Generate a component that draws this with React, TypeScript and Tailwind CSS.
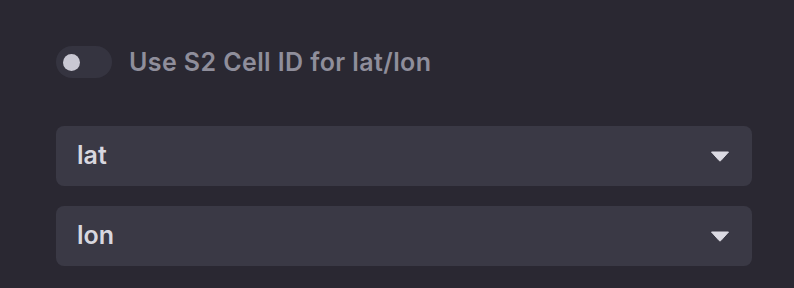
import React from "react";

function Caret() {
  return (
    <svg width="20" height="11" viewBox="0 0 20 11" className="shrink-0">
      <path d="M1.5 1 L18.5 1 L10.8 9.6 Q10 10.4 9.2 9.6 Z" fill="#dcdbe3" stroke="#dcdbe3" strokeWidth="1" strokeLinejoin="round" />
    </svg>
  );
}

function Select({ value }: { value: string }) {
  return (
    <div className="flex h-[60px] items-center justify-between rounded-[8px] bg-[#3a3945] pl-[21px] pr-[22px]">
      <span className="text-[25px] font-semibold text-[#d8d7df]">{value}</span>
      <Caret />
    </div>
  );
}

export default function App() {
  return (
    <div
      className="h-[288px] w-[794px] bg-[#2a2832] pl-[56px] pr-[42px] pt-[46px]"
      style={{ fontFamily: "Inter, 'Noto Sans', sans-serif" }}
    >
      <div className="flex h-[32px] items-center gap-[17px]">
        <div className="flex h-[32px] w-[56px] items-center rounded-full bg-[#353440] pl-[7px]">
          <div className="h-[17px] w-[17px] rounded-full bg-[#c9c8d3]" />
        </div>
        <span className="mt-[2px] text-[25px] font-semibold tracking-[0.4px] text-[#8f8e9b]">Use S2 Cell ID for lat/lon</span>
      </div>
      <div className="mt-[48px] flex flex-col gap-[20px]">
        <Select value="lat" />
        <Select value="lon" />
      </div>
    </div>
  );
}
